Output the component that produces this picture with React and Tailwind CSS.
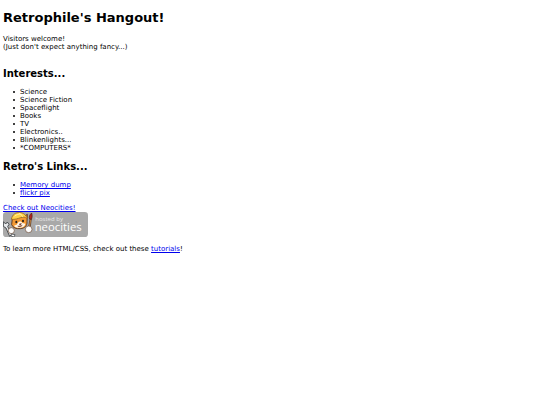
const interests = [
  'Science',
  'Science Fiction',
  'Spaceflight',
  'Books',
  'TV',
  'Electronics..',
  'Blinkenlights...',
  '*COMPUTERS*',
]

const links = [
  { label: 'Memory dump', href: '#memory-dump' },
  { label: 'flickr pix', href: '#flickr' },
]

function NeocitiesBadge() {
  return (
    <svg viewBox="0 0 255 75" className="block h-[25px] w-[85px]" role="img" aria-label="Hosted by Neocities">
      <rect width="255" height="75" rx="10" fill="#a9a9a9" />
      {/* wrench */}
      <path d="M1 29l7 7 5-6 5 7-4 7 13 23-7 6L9 48l-8-5z" fill="#e6e8ea" stroke="#33373b" strokeWidth="2.5" />
      {/* head and ears */}
      <path d="M28 19l-2 19c4 10 14 13 26 12 13-1 21-9 20-21l1-22-12 8-18 1z" fill="#f39a35" stroke="#4a2a17" strokeWidth="2.5" />
      <path d="M46 31c5-4 9-2 12 2l9 2c-1 8-8 12-16 12-8 1-15-1-18-6l8-3z" fill="#fff7ea" />
      {/* hard hat */}
      <path d="M25 22C28 7 38 1 50 2c12 0 20 8 23 18-7-5-12-6-20-3-9 3-17 6-28 5z" fill="#ffd34a" stroke="#9a6420" strokeWidth="2.5" />
      <path d="M35 13c5-6 13-8 21-6M48 4c6 3 10 7 12 12" fill="none" stroke="#fff0a0" strokeWidth="3" />
      <ellipse cx="40" cy="30" rx="3" ry="4" fill="#28201c" />
      <ellipse cx="60" cy="27" rx="3" ry="4" fill="#28201c" />
      <path d="M49 36l6-1-3 4zM44 42c4 3 10 2 14-2" fill="#71351f" stroke="#71351f" strokeWidth="2" />
      {/* paws */}
      <circle cx="25" cy="56" r="9" fill="#fff" stroke="#6b4a35" strokeWidth="2" />
      <path d="M25 66l11 2-3 7-9-3z" fill="#f8f8f8" stroke="#33373b" strokeWidth="2" />
      <path d="M75 57l6-37 4 1-5 37z" fill="#e9a04c" stroke="#4a2a17" strokeWidth="2" />
      <path d="M80 21c-3-7 0-13 6-18 2 7 2 13-1 19z" fill="#b52a20" stroke="#4a1714" strokeWidth="2" />
      <circle cx="77" cy="52" r="10" fill="#fff" stroke="#6b4a35" strokeWidth="2" />
      <text x="97" y="28" fontSize="18" fill="#e8e8e8" className="font-['Open_Sans',sans-serif]">hosted by</text>
      <text x="95" y="58" fontSize="34" fill="#ffffff" className="font-['Open_Sans',sans-serif]">neocities</text>
    </svg>
  )
}

function TextLink({ href, children }) {
  return (
    <a href={href} className="text-[#0000ee] underline">
      {children}
    </a>
  )
}

function BulletItem({ children }) {
  return (
    <li className="flex items-center gap-[5px] before:size-[2px] before:rounded-full before:bg-black before:content-['']">
      {children}
    </li>
  )
}

export default function App() {
  return (
    <main className="min-h-screen bg-white px-[3px] pt-2 font-['DejaVu_Sans',sans-serif] text-[7px] leading-[8px] text-black">
      <h1 className="text-[13px] leading-5 font-bold">Retrophile's Hangout!</h1>
      <p className="mt-[7px]">
        Visitors welcome!
        <br />
        (Just don't expect anything fancy...)
      </p>

      <section className="mt-[17px]">
        <h2 className="text-[10px] leading-3 font-bold">Interests...</h2>
        <ul className="mt-2 pl-[10px]">
          {interests.map((item) => (
            <BulletItem key={item}>{item}</BulletItem>
          ))}
        </ul>
      </section>

      <section className="mt-[9px]">
        <h2 className="text-[10px] leading-3 font-bold">Retro's Links...</h2>
        <ul className="mt-2 pl-[10px]">
          {links.map((link) => (
            <BulletItem key={link.label}>
              <TextLink href={link.href}>{link.label}</TextLink>
            </BulletItem>
          ))}
        </ul>
      </section>

      <a href="#neocities" className="mt-[7px] block w-fit text-[#0000ee] underline">
        Check out Neocities!
        <NeocitiesBadge />
      </a>

      <p className="mt-2">
        To learn more HTML/CSS, check out these <TextLink href="#tutorials">tutorials</TextLink>!
      </p>
    </main>
  )
}
